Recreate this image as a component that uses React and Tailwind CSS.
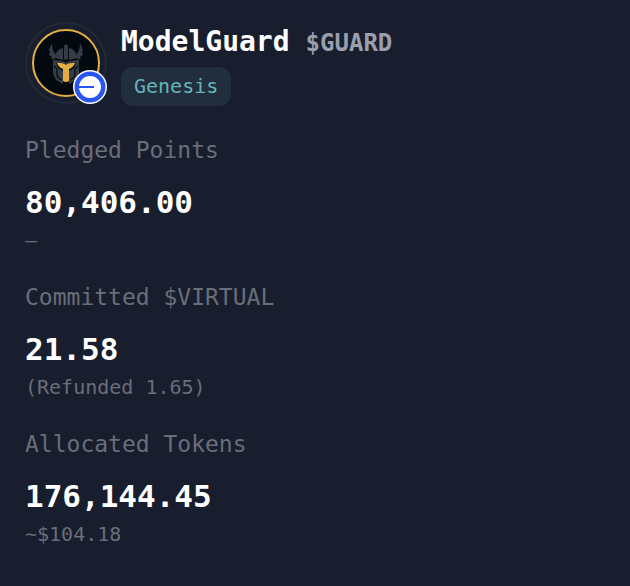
const stats = [
  { label: "Pledged Points", value: "80,406.00", note: "–" },
  { label: "Committed $VIRTUAL", value: "21.58", note: "(Refunded 1.65)" },
  { label: "Allocated Tokens", value: "176,144.45", note: "~$104.18" },
];

function GuardLogo() {
  return (
    <svg viewBox="0 0 82 82" className="size-full" role="img" aria-label="ModelGuard">
      <circle cx="41" cy="41" r="40" fill="none" stroke="#222a38" strokeWidth="2" />
      <circle cx="41" cy="41" r="33" fill="#03090e" stroke="#e5ae43" strokeWidth="2" />
      <g fill="#343d46">
        <path d="M27 21c-1 3-3 5-3 8l2 1-2 1 1 3 2 0-1 2 3 2 2-5c-3-3-4-7-4-12zM55 21c1 3 3 5 3 8l-2 1 2 1-1 3-2 0 1 2-3 2-2-5c3-3 4-7 4-12z" />
        <path d="M39 24l2-2 2 2v13l-2 1-2-1z" />
        <path d="M38 26c-5 1-8 5-8 10l8 2zM44 26c5 1 8 5 8 10l-8 2z" />
        <path d="M28 38l10 1 3 2 3-2 10-1v14l-3 6-7 4V49l5-3 2-5c-5 0-8 0-10 2-2-2-5-2-10-2l2 5 5 3v13l-7-4-3-6z" />
      </g>
      <path d="M29 44l3 3v7l4 4M53 44l-3 3v7l-4 4" fill="none" stroke="#03090e" strokeWidth="1.2" />
      <path d="M32 41c4 0 7 0 9 2 2-2 5-2 9-2-1 3-3 5-6 6v12l-2 1h-2l-2-1V47c-3-1-5-3-6-6z" fill="#e5ae43" />
    </svg>
  );
}

function ChainBadge() {
  return (
    <svg viewBox="0 0 34 34" className="absolute right-0 bottom-0 size-[34px]" aria-hidden="true">
      <circle cx="17" cy="17" r="17" fill="#fff" />
      <circle cx="17" cy="17" r="15.5" fill="#2956ee" />
      <circle cx="17" cy="17" r="11" fill="#fff" />
      <path d="M5 16h16v2H5z" fill="#2956ee" />
    </svg>
  );
}

export default function App() {
  return (
    <main className="min-h-screen bg-[#181e2d] px-[25px] pt-[22px] pb-8 font-['DejaVu_Sans_Mono',monospace] text-[#6a6d7a]">
      <header className="flex items-start gap-[14px]">
        <div className="relative size-[82px] shrink-0">
          <GuardLogo />
          <ChainBadge />
        </div>
        <div>
          <h1 className="flex items-baseline gap-4 text-[28px] leading-10 font-bold text-white">
            ModelGuard <span className="text-2xl text-[#9b9eab]">$GUARD</span>
          </h1>
          <span className="mt-[5px] inline-block rounded-xl bg-[#222e3d] px-[13px] text-xl leading-[39px] text-[#62b5b8]">
            Genesis
          </span>
        </div>
      </header>
      <dl className="mt-7 flex flex-col gap-[27px]">
        {stats.map((stat) => (
          <div key={stat.label}>
            <dt className="text-[23px] leading-8">{stat.label}</dt>
            <dd className="mt-4 text-[31px] leading-10 font-bold text-white">{stat.value}</dd>
            <dd className="mt-1 text-xl leading-7">{stat.note}</dd>
          </div>
        ))}
      </dl>
    </main>
  );
}
